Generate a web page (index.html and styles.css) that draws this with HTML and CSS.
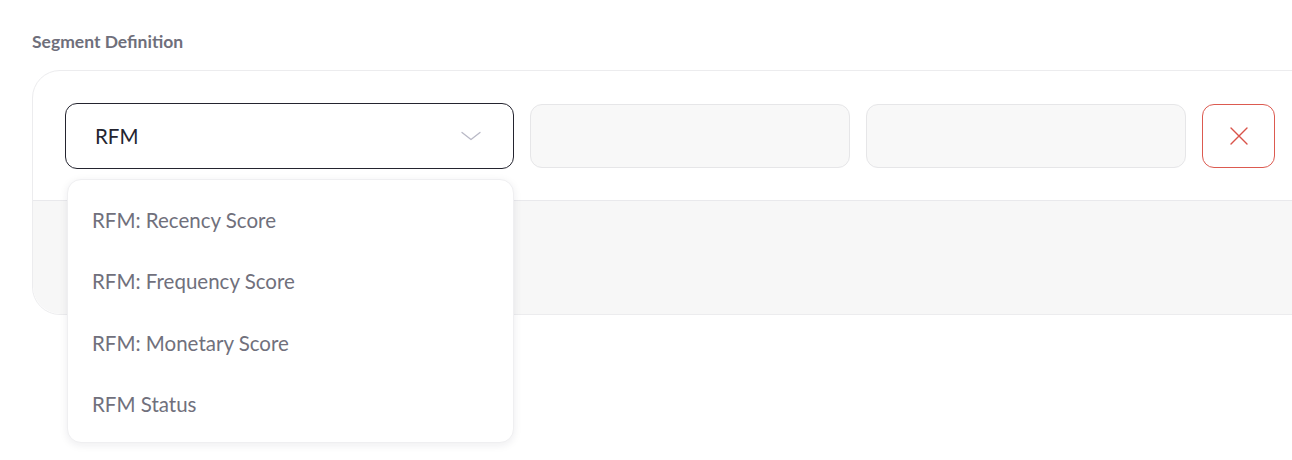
FILE: index.html
```html
<!DOCTYPE html>
<html lang="en">
<head>
    <meta charset="UTF-8">
    <meta name="viewport" content="width=device-width, initial-scale=1.0">
    <title>Segment Definition</title>
    <link rel="stylesheet" href="styles.css">
</head>
<body>
    <div class="page">
        <h3 class="section-label">Segment Definition</h3>

        <div class="segment-card">
            <div class="rule-row">
                <div class="select-wrap">
                    <div class="select is-open">
                        <span class="select-value">RFM</span>
                        <svg class="chevron" width="20" height="10" viewBox="0 0 20 10" fill="none">
                            <path d="M1 1.5L10 8.5L19 1.5" stroke="#b9b9c6" stroke-width="1.3" stroke-linecap="round" stroke-linejoin="round"/>
                        </svg>
                    </div>
                    <ul class="dropdown">
                        <li>RFM: Recency Score</li>
                        <li>RFM: Frequency Score</li>
                        <li>RFM: Monetary Score</li>
                        <li>RFM Status</li>
                    </ul>
                </div>
                <div class="field field-op"></div>
                <div class="field field-value"></div>
                <button class="remove-btn" type="button" aria-label="Remove">
                    <svg width="20" height="20" viewBox="0 0 20 20" fill="none">
                        <path d="M2 2L18 18M18 2L2 18" stroke="#d9534a" stroke-width="1.4" stroke-linecap="round"/>
                    </svg>
                </button>
            </div>
            <div class="card-footer"></div>
        </div>
    </div>
</body>
</html>
```

FILE: styles.css
```css
body {
    margin: 0;
    padding: 0;
    background: #ffffff;
    font-family: Lato, "Open Sans", Arial, sans-serif;
    color: #24242f;
}
.page {
    box-sizing: border-box;
    min-height: 100vh;
    padding: 31px 0 0 32px;
    overflow-x: hidden;
}
.section-label {
    margin: 0 0 17px;
    font-size: 17.5px;
    font-weight: 700;
    line-height: 22px;
    color: #6f6f7b;
}
.segment-card {
    margin-right: -40px;
    border: 1px solid #ececee;
    border-radius: 28px;
    background: #ffffff;
}
.rule-row {
    display: flex;
    align-items: center;
    gap: 16px;
    padding: 32px 0 31px 32px;
    border-bottom: 1px solid #e9e9ec;
}
.select-wrap {
    position: relative;
    width: 449px;
}
.select {
    box-sizing: border-box;
    height: 66px;
    display: flex;
    align-items: center;
    justify-content: space-between;
    padding: 0 30px 0 29px;
    border: 1.5px solid #24242f;
    border-radius: 12px;
    background: #ffffff;
}
.select-value {
    font-size: 20.5px;
    color: #24242f;
}
.chevron {
    margin-right: 2px;
}
.field {
    box-sizing: border-box;
    width: 320px;
    height: 64px;
    border: 1px solid #e6e6e8;
    border-radius: 12px;
    background: #f8f8f8;
}
.remove-btn {
    box-sizing: border-box;
    width: 73px;
    height: 64px;
    display: flex;
    align-items: center;
    justify-content: center;
    border: 1px solid #dc5a50;
    border-radius: 12px;
    background: #ffffff;
    padding: 0;
}
.card-footer {
    height: 113px;
    background: #f7f7f7;
    border-radius: 0 0 28px 28px;
}
.dropdown {
    position: absolute;
    top: 76px;
    left: 2px;
    width: 447px;
    box-sizing: border-box;
    margin: 0;
    padding: 10px 0 7px;
    list-style: none;
    background: #ffffff;
    border: 1px solid #efeff1;
    border-radius: 14px;
    box-shadow: 0 2px 8px rgba(30, 30, 50, 0.08);
    z-index: 10;
}
.dropdown li {
    padding: 0 24px;
    height: 61.3px;
    line-height: 61.3px;
    font-size: 20.5px;
    color: #70707c;
}
```
